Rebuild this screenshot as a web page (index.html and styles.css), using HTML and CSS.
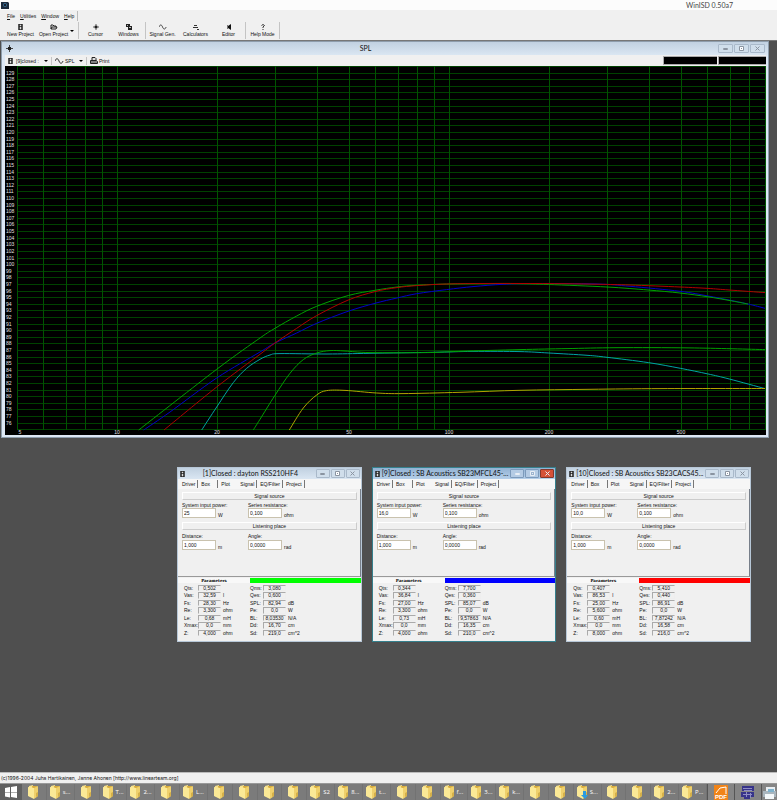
FILE: index.html
```html
<!DOCTYPE html>
<html lang="en">
<head>
<meta charset="utf-8">
<title>WinISD 0.50a7</title>
<link rel="stylesheet" href="styles.css">
</head>
<body>
<svg class="defs" aria-hidden="true">
  <defs>
    <symbol id="box" viewBox="0 0 6 8"><path d="M0 0h6v8H0z" fill="#222"/><path d="M2 1h2v2H2zM2 4h2v3H2z" fill="#ddd"/></symbol>
    <symbol id="wave" viewBox="0 0 9 6"><path d="M0 3C1 0 3 0 4 3S7 6 8 3" fill="none" stroke="#333"/></symbol>
    <symbol id="cross" viewBox="0 0 7 7"><path d="M3.500 0v7M0 3.500h7" stroke="#444" fill="none"/><path d="M2 2h3v3H2z" fill="#222"/></symbol>
    <symbol id="folder" viewBox="0 0 11 14">
      <path d="M1 1l4-1v12l-4-1z" fill="#f8e28b"/><path d="M4 1l5 0v11l-3 1z" fill="#d8ac3c"/>
      <path d="M0 2l6 1v11l-6-3z" fill="#fbe996"/><path d="M6 3l4-2v10l-4 3z" fill="#efd06c"/><path d="M8 8l2-1v4l-2 1z" fill="#d5b049"/>
    </symbol>
  </defs>
</svg>

<header class="titlebar">
  <svg class="app-icon" viewBox="0 0 8 8"><path d="M0 1h7l1 1v6H0z" fill="#1d2b3c"/><circle cx="4" cy="4" r="2" fill="#35688f"/><path d="M3 3h2v2H3z" fill="#16202c"/></svg>
  <h1>WinISD 0.50a7</h1>
</header>

<nav class="menu" aria-label="Main menu">
  <button><u>F</u>ile</button><button><u>U</u>tilities</button><button><u>W</u>indow</button><button><u>H</u>elp</button>
</nav>

<div class="toolbar">
  <div class="group">
    <button class="tool"><svg class="i-box"><use href="#box"/></svg>New Project</button>
    <button class="tool"><svg viewBox="0 0 8 6"><path d="M1 5V1h2l1 1h2v1M1 5l1-2h5L6 5z" fill="none" stroke="#222"/></svg>Open Project</button>
    <button class="drop" aria-label="Recent projects"></button>
  </div>
  <div class="group">
    <button class="tool"><svg><use href="#cross"/></svg>Cursor</button>
    <button class="tool"><svg viewBox="0 0 8 6"><path d="M1 0h4v3H1zM3 2h4v4H3z" fill="#222"/><path d="M2 1h1v1H2zM4 3h2v1H4z" fill="#bbb"/></svg>Windows</button>
  </div>
  <div class="group">
    <button class="tool"><svg><use href="#wave"/></svg>Signal Gen.</button>
    <button class="tool"><svg viewBox="0 0 8 6"><path d="M1 3.500h5M2 1.500h3M5 5.500h2" stroke="#333"/></svg>Calculators</button>
    <button class="tool"><svg viewBox="0 0 8 6"><path d="M3 2l3-2v6L3 4z" fill="#111"/><path d="M2.500 1v4" stroke="#777"/></svg>Editor</button>
  </div>
  <div class="group">
    <button class="tool"><svg viewBox="0 0 8 6"><path d="M2.500 1.500Q4-.5 5.500 1.500L4 3v1M4 5v1" fill="none" stroke="#333"/></svg>Help Mode</button>
  </div>
</div>

<main class="desktop">
  <section class="window plot-window">
    <header class="window-title">
      <svg class="title-icon"><use href="#cross"/></svg>
      <h2>SPL</h2>
      <div class="controls"></div>
    </header>
    <div class="plot-tools">
      <button class="pick project"><svg class="i-box"><use href="#box"/></svg>[9]closed :<i class="arrow"></i></button>
      <button class="pick graph"><svg class="i-wave"><use href="#wave"/></svg>SPL<i class="arrow"></i></button>
      <button class="pick"><svg class="i-print" viewBox="0 0 8 7"><path d="M2 3V.5h3l1 1V3M.5 3.500h6l1 1v2h-7zM1 5h6" fill="#ddd" stroke="#222"/></svg>Print</button>
      <output class="readout wide" aria-label="Cursor frequency"></output>
      <output class="readout" aria-label="Cursor level"></output>
    </div>
    <svg class="plot" viewBox="0 0 761 369" role="img" aria-label="SPL in dB by frequency in Hz"></svg>
  </section>
  <div class="projects"></div>
</main>

<footer class="status">(c)1996-2004 Juha Hartikainen, Janne Ahonen [http://www.linearteam.org]</footer>

<nav class="taskbar" aria-label="Taskbar">
  <button class="start" aria-label="Start"><svg viewBox="0 0 12 12"><path d="M0 2l5-1v5H0zM6 1l6-1v6H6zM0 6.500h5v5l-5-1zM6 6.500h6V12l-6-1z" fill="#fff"/></svg></button>
  <div class="tasks"></div>
  <button class="pinned" aria-label="PDF reader"><svg viewBox="0 0 14 15"><path d="M0 0h14v15H0z" fill="#f18418"/><path d="M2 8l4-5 6-1v7" fill="none" stroke="#fff"/><text x="1" y="14">PDF</text></svg></button>
  <button class="pinned" aria-label="WinISD"><svg viewBox="0 0 14 15"><path d="M1 1h12v5H1zM0 7h13v5H9v2H3v-2H0z" fill="#37348a"/><path d="M2 3.500h9M3 5.500h8M2 9.500h9M5.500 7v5M9.500 8v5" stroke="#8f8dc4" fill="none"/></svg></button>
  <button class="pinned last" aria-label="Printer"><svg viewBox="0 0 14 15"><path d="M3 2h9v5H3z" fill="#e9eef2"/><path d="M0 6h13v6H0z" fill="#aab6be"/><path d="M2 9h9v5H2z" fill="#f4f8fa"/><path d="M5 4h6v3H5z" fill="#7fb2cc"/></svg></button>
</nav>
<script src="app.js"></script>
</body>
</html>
```
FILE: styles.css
```css
* { box-sizing: border-box; }
body {
  margin: 0;
  min-height: 100vh;
  display: flex;
  flex-direction: column;
  background: #4f4f4f;
  color: #111;
  font: 5px/6px "Liberation Sans", Arial, sans-serif;
}
button, input, output { font: inherit; color: inherit; }
button { border: 0; padding: 0; background: none; white-space: nowrap; }
h1, h2 { margin: 0; font: 7px/9px Lato, "Open Sans", sans-serif; }
svg { display: block; flex: none; }
.defs { position: absolute; width: 0; height: 0; }

.titlebar { display: flex; justify-content: space-between; height: 10px; background: #fcfcfc; padding: 1px 44px 0 1px; }
.titlebar h1 { color: #444; }
.app-icon { width: 8px; height: 8px; }

.menu { display: flex; gap: 5px; height: 12px; background: #f0f0f0; padding-left: 7px; align-items: center; }
.menu button:last-child { border-right: 1px solid #bbb; padding-right: 3px; height: 10px; }

.toolbar { display: flex; height: 18px; background: #f0f0f0; padding-left: 4px; }
.group { display: flex; border-right: 1px solid #c4c4c4; height: 17px; }
.tool { width: 33px; display: flex; flex-direction: column; align-items: center; gap: 1px; padding-top: 2px; }
.tool svg { width: 8px; height: 6px; }
.tool .i-box { width: 5px; }
.drop { width: 8px; }
.drop::before, .arrow {
  content: "";
  display: block;
  width: 0;
  border: 2px solid transparent;
  border-top-color: #000;
  border-bottom: 0;
}

.desktop { flex: 1; border-top: 1px solid #777; }
.window { border: 1px solid #9eb0c2; background: #f0f0f0; }
.window-title { display: flex; align-items: center; background: linear-gradient(#c1d1e1, #dae6f2); }
.window-title h2 { flex: 1; min-width: 0; text-align: center; white-space: nowrap; }
.controls { display: flex; flex: none; gap: 1px; }
.controls button { width: 15px; height: 9px; border: 1px solid #a9b9ca; border-radius: 1px; background: #d0deeb; display: grid; place-items: center; }
.controls svg { width: 5px; height: 5px; }

.plot-window { margin: 0 8px 0 1px; border-color: #8e9dac; background: #dde8f5; padding: 0 2px 2px 3px; }
.plot-window .window-title { height: 13px; margin: 0 -2px 0 -3px; padding: 0 3px 0 4px; }
.title-icon { width: 7px; height: 7px; }
.plot-tools { display: flex; align-items: center; height: 11px; background: #f0f0f0; padding-left: 3px; gap: 1px; }
.pick { display: flex; align-items: center; gap: 1px; height: 8px; padding-right: 3px; }
.project, .graph { border-right: 1px solid #c4c4c4; }
.pick .arrow { margin-left: auto; }
.project { width: 44px; gap: 3px; }
.graph { width: 34px; padding-left: 2px; }
.i-box { width: 5px; height: 6px; }
.i-wave { width: 9px; height: 6px; }
.i-print { width: 8px; height: 7px; margin-left: 2px; }
.readout { width: 48px; height: 9px; background: #000; border: 1px solid #aaa; border-right: 0; }
.readout.wide { width: 54px; margin-left: auto; }
.plot { width: 100%; height: auto; background: #000; }
.plot text { fill: #e0e0e0; font-size: 5px; }
.plot .axis { text-anchor: middle; }
.grid { fill: none; stroke: #004200; }
.grid.major { stroke: #005400; }
.curve { fill: none; stroke-width: 1; }

.projects { display: flex; gap: 10px; margin: 29px 26px 29px 177px; }
.project-window { flex: 1; min-width: 0; border-color: #b7c7d7; }
.project-window.active { border-color: #35808d; }
.project-window .window-title { height: 11px; padding: 0 1px 0 2px; gap: 2px; }
.project-window.active .window-title { background: linear-gradient(#92b2d3, #b5cfe9); }
.project-window .controls button { width: 14px; }
.project-window.active .controls button { background: #b4cbe4; border-color: #7c9abb; }
.project-window.active .controls button:last-child { background: #d65137; border-color: #84382c; }
.tabs { display: flex; height: 10px; align-items: center; padding-left: 4px; background: #f6f6f6; }
.tabs button { height: 8px; padding-right: 2px; margin-right: 3px; border-right: 1px solid #777; text-align: left; }
.tabs .spaced { width: 17px; }
.tabs .plain { width: 16px; border-right-color: transparent; }
.page { border-right: 1px solid #777f8a; border-bottom: 1px solid #999; height: 88px; padding: 3px 3px 0 4px; }
.band { height: 8px; line-height: 7px; text-align: center; border: 1px solid #ccc; border-top-color: #fff; border-left-color: #fff; }
.fields { display: grid; grid-template-columns: 66px 1fr; height: 22px; padding-top: 2px; }
.fields.low { padding-top: 3px; }
.field { display: grid; grid-template-columns: auto 1fr; column-gap: 2px; align-content: start; }
.field label { grid-column: 1 / 3; line-height: 6px; }
.field input { width: 34px; height: 10px; border: 1px solid #c9c2ae; background: #fff; padding: 0 1px 1px; border-radius: 0; }
.field .unit { align-self: end; }
.fields.low label { padding-bottom: 1px; }
.strip { display: grid; grid-template-columns: 72px 1fr; height: 7px; padding: 1px 0; }
.strip b { text-align: center; font: bold 4px/5px "DejaVu Serif", serif; color: #000; background: #f8f8f8; }
.green { background: #00ff00; }
.blue { background: #0000ff; }
.red { background: #ff0000; }
.params { display: grid; grid-template-columns: 14px 23px 26px 13px 23px 1fr; grid-template-rows: repeat(7, 1fr); column-gap: 1px; height: 57px; padding: 1px 5px 4px; }
.params output { text-align: center; line-height: 4px; border: 1px solid #aaa; border-right-color: #eee; border-bottom-color: #eee; margin-bottom: 1px; }
.params span { padding-left: 1px; }

.status { height: 11px; background: #f0f0f0; border-top: 1px solid #bbb; padding: 2px 1px; font: 5px/7px Inter, sans-serif; white-space: nowrap; }
.taskbar { display: flex; height: 17px; background: #7b7b7b; border-top: 1px solid #999; overflow: hidden; }
.start { width: 22px; background: #606060; display: grid; place-items: center; }
.start svg { width: 12px; height: 12px; }
.tasks { flex: 1; display: flex; min-width: 0; }
.task { flex: 1 1 0; min-width: 0; display: flex; align-items: center; justify-content: center; gap: 1px; border-right: 1px solid #727272; padding-right: 1px; color: #fff; font: 6px/8px "Open Sans", sans-serif; }
.task svg { width: 11px; height: 14px; }
.task.named { justify-content: flex-start; padding-left: 3px; gap: 2px; }
.pinned { width: 27px; background: #858585; border-left: 1px solid #555; display: grid; place-items: center; }
.pinned svg { width: 14px; height: 15px; }
.pinned text { font: bold 6px "Liberation Sans", sans-serif; fill: #fff; }
.pinned.last { width: 16px; }
```
FILE: app.js
```js
const ns = "http://www.w3.org/2000/svg";
const plot = document.querySelector(".plot");

function draw(name, attrs, text) {
  const el = document.createElementNS(ns, name);
  for (const key in attrs) el.setAttribute(key, attrs[key]);
  if (text !== undefined) el.textContent = text;
  plot.append(el);
}

const right = 760, bottom = 364;
const xOf = f => Math.round(112 + 332 * Math.log10(f / 10));
const yOf = db => Math.round((130 - db) * 6.604);

for (let db = 130; db >= 75; db--) {
  const y = yOf(db);
  draw("path", { class: "grid", d: `M12 ${y + 0.5}H${right + 1}` });
  if (db < 130 && db > 75) draw("text", { x: 1, y: y + 2 }, db);
}
for (const f of [5, 6, 7, 8, 9, 10, 20, 30, 40, 50, 60, 70, 80, 90, 100, 200, 300, 400, 500, 600, 700, 800, 900]) {
  const x = Math.min(xOf(f), right);
  draw("path", { class: "grid major", d: `M${x + 0.5} 0V${bottom}` });
}
for (const f of [5, 10, 20, 50, 100, 200, 500]) {
  draw("text", { class: "axis", x: f === 5 ? 15 : xOf(f), y: 368 }, f);
}

const curves = [
  ["#0000c8", [138.7,364, 165,346, 211.7,312, 255,286, 270,277, 291.7,267, 311.7,257.3, 343,245.3, 370,237.3, 392,232, 411.7,227.7, 441.7,223.6, 468,220.6, 498,218.3, 525,217.6, 592,218, 625,220.3, 675,225.3, 703,230, 724,234, 743,238, 760,242.3]],
  ["#00a000", [133.7,364, 211.7,303.3, 255,272, 270,262.3, 291.7,250, 311.7,240.3, 343.3,229.5, 370,224.3, 392,221, 411.7,219.3, 441.7,218, 488,217.5, 515,217.6, 543.7,218.5, 602,221, 643,224, 675,227, 703,230.8, 724,234.4, 743,238]],
  ["#b00000", [159,364, 211.7,321, 255,288.3, 270,277, 291.7,262.3, 311.7,249.6, 343.3,234, 370,225.6, 392,221.6, 411.7,219.6, 441.7,218, 480,217.5, 515,217.5, 560,217.7, 595,218.3, 625,219, 675,221, 703,222.4, 724,224, 760,226.6]],
  ["#00a4a4", [196.7,364, 211.7,341, 228.3,316.6, 241.7,302.3, 255,293.3, 265,289, 275,287.6, 322,288, 365,287.3, 428,286.3, 468,285.4, 515,285.6, 543.7,287, 582,289.3, 602,291.3, 643.3,296.6, 675.3,302.3, 702.7,307.9, 724.3,313, 760,322.6]],
  ["#00a000", [248.3,364, 255,353.3, 270,329.3, 285,307.3, 298.3,293.6, 311.7,287, 325,284.6, 340,285, 365,286.6, 421.7,286.6, 455,285.3, 515,283.6, 562,282.6, 612,281.7, 685,281.9, 760,283.6]],
  ["#b0a400", [284.3,364, 298.3,342, 311.7,329, 321.7,324.6, 340,324.4, 371.7,327, 398,327.6, 455,326.3, 515,324.3, 585,323.3, 657,322.6, 760,322.5]]
];

// Catmull-Rom spline through the sampled points
for (const [stroke, p] of curves) {
  const at = i => {
    const k = Math.max(0, Math.min(p.length / 2 - 1, i)) * 2;
    return [p[k], p[k + 1]];
  };
  let d = `M${p[0]} ${p[1]}`;
  for (let i = 0; i < p.length / 2 - 1; i++) {
    const [a, b, c, e] = [at(i - 1), at(i), at(i + 1), at(i + 2)];
    d += `C${b[0] + (c[0] - a[0]) / 6} ${b[1] + (c[1] - a[1]) / 6} ${c[0] - (e[0] - b[0]) / 6} ${c[1] - (e[1] - b[1]) / 6} ${c[0]} ${c[1]}`;
  }
  draw("path", { class: "curve", stroke, d });
}

const projects = [
  { title: "[1]Closed : dayton RSS210HF4", colour: "green", power: "25",
    left: ["0,502", "32,59", "28,30", "3,300", "0,68", "0,0", "4,000"],
    right: ["3,080", "0,600", "82,94", "0,0", "8,03530", "16,70", "219,0"] },
  { title: "[9]Closed : SB Acoustics SB23MFCL45-...", colour: "blue", power: "16,0", active: true,
    left: ["0,344", "36,84", "27,00", "3,300", "0,73", "0,0", "4,000"],
    right: ["7,700", "0,360", "85,07", "0,0", "9,57863", "16,35", "210,0"] },
  { title: "[10]Closed : SB Acoustics SB23CACS45...", colour: "red", power: "10,0",
    left: ["0,407", "86,53", "25,00", "5,600", "0,60", "0,0", "8,000"],
    right: ["5,410", "0,440", "86,91", "0,0", "7,87242", "16,58", "216,0"] }
];
const leftNames = [["Qts:", ""], ["Vas:", "l"], ["Fs:", "Hz"], ["Re:", "ohm"], ["Le:", "mH"], ["Xmax:", "mm"], ["Z:", "ohm"]];
const rightNames = [["Qms:", ""], ["Qes:", ""], ["SPL:", "dB"], ["Pe:", "W"], ["BL:", "N/A"], ["Dd:", "cm"], ["Sd:", "cm^2"]];

const field = (id, label, value, unit) =>
  `<div class="field"><label for="${id}">${label}</label><input id="${id}" value="${value}"><span class="unit">${unit}</span></div>`;
const param = ([name, unit], value) => `<span>${name}</span><output>${value}</output><span>${unit}</span>`;

document.querySelector(".projects").innerHTML = projects.map((p, i) => `
  <section class="window project-window${p.active ? " active" : ""}">
    <header class="window-title"><svg class="i-box"><use href="#box"/></svg><h2>${p.title}</h2><div class="controls"></div></header>
    <div class="tabs"><button>Driver</button><button class="spaced">Box</button><button class="plain">Plot</button><button class="selected">Signal</button><button>EQ/Filter</button><button>Project</button></div>
    <div class="page">
      <div class="band">Signal source</div>
      <div class="fields">${field("power" + i, "System input power:", p.power, "W")}${field("res" + i, "Series resistance:", "0,100", "ohm")}</div>
      <div class="band">Listening place</div>
      <div class="fields low">${field("dist" + i, "Distance:", "1,000", "m")}${field("angle" + i, "Angle:", "0,0000", "rad")}</div>
    </div>
    <div class="strip"><b>Parameters</b><div class="${p.colour}"></div></div>
    <div class="params">${leftNames.map((n, k) => param(n, p.left[k]) + param(rightNames[k], p.right[k])).join("")}</div>
  </section>`).join("");

const icons = [
  ["Minimize", '<path d="M.5 2.500h4v1h-4z"/>'],
  ["Maximize", '<path d="M.5.5h4v4h-4zM2 2.500h1"/>'],
  ["Close", '<path d="M.5.5l4 4M4.500.5l-4 4"/>']
];
for (const box of document.querySelectorAll(".controls")) {
  const active = box.closest(".active");
  box.innerHTML = icons.map(([name, path]) =>
    `<button aria-label="${name}"><svg viewBox="0 0 5 5" fill="${active ? "#9db4cf" : "#fff"}" stroke="${active ? "#e8eef5" : "#8a94a1"}">${path}</svg></button>`).join("");
}

const tasks = ["", "s...", "", "T...", "2...", "", "L...", "", "", "", "", "S2", "8...", "t...", "", "", "f...", "3...", "k...", "", "", "S...", "", "", "2...", "P..."];
document.querySelector(".tasks").innerHTML = tasks.map(t =>
  `<button class="task${t ? " named" : ""}"${t ? "" : ' aria-label="Folder"'}><svg viewBox="0 0 11 14"><use href="#folder"/>${t === "S..." ? '<path d="M6 6h3v4h2l-3 4-4-4h2z" fill="#2b9be0"/>' : ""}</svg>${t}</button>`).join("");
```
